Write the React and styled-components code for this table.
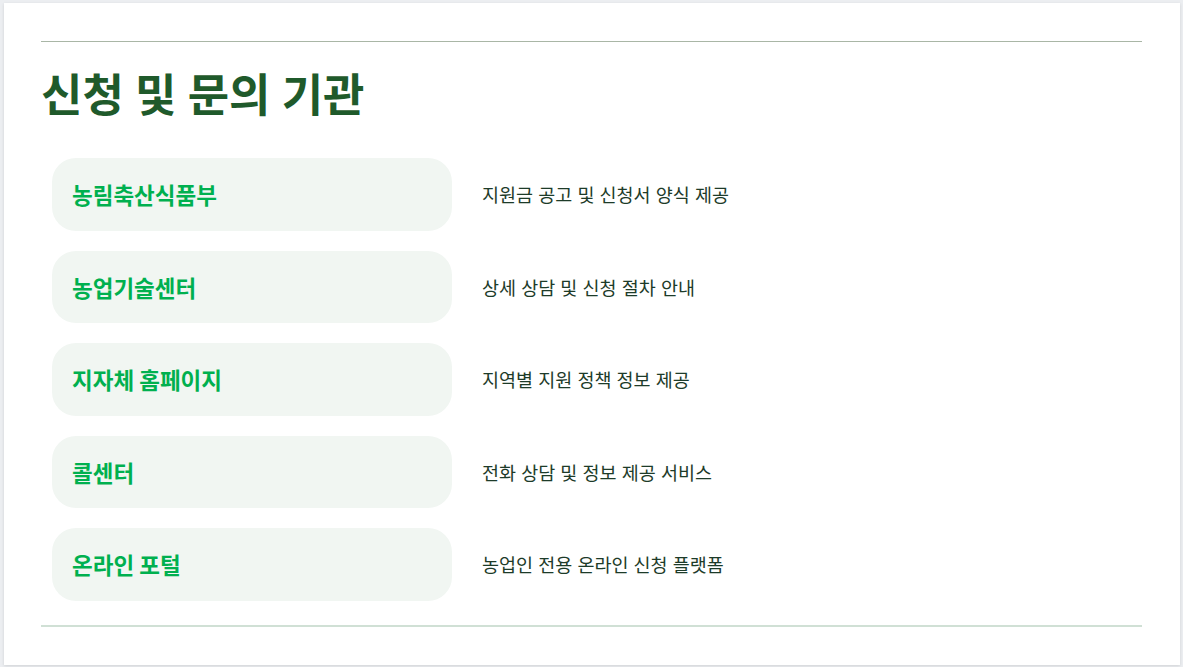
import styled, {createGlobalStyle} from "styled-components";

const items = [
  {name: "농림축산식품부", desc: "지원금 공고 및 신청서 양식 제공"},
  {name: "농업기술센터", desc: "상세 상담 및 신청 절차 안내"},
  {name: "지자체 홈페이지", desc: "지역별 지원 정책 정보 제공"},
  {name: "콜센터", desc: "전화 상담 및 정보 제공 서비스"},
  {name: "온라인 포털", desc: "농업인 전용 온라인 신청 플랫폼"},
];

function App() {
  return (
    <>
      <GlobalStyle/>
      <Card>
        <TopRule/>
        <Title>신청 및 문의 기관</Title>
        <List>
          {items.map(item => (
            <Row key={item.name}>
              <NameBox>{item.name}</NameBox>
              <Desc>{item.desc}</Desc>
            </Row>
          ))}
        </List>
        <BottomRule/>
      </Card>
    </>
  );
}

const GlobalStyle = createGlobalStyle`
  body {
    margin: 0;
    background: #eceef1;
    font-family: "Noto Sans CJK KR", "Noto Sans", sans-serif;
  }
  #root {
    padding: 3px 3px 2px 4px;
  }
`

const Card = styled.section`
  background: #ffffff;
  height: 662px;
  box-sizing: border-box;
  padding: 38px 38px 0 37px;
  box-shadow: 0 1px 3px rgba(0, 0, 0, 0.12);
`

const TopRule = styled.div`
  height: 1px;
  background: #a9b6a6;
`

const Title = styled.h1`
  margin: 22px 0 0 0;
  font-size: 45px;
  line-height: 58px;
  font-weight: 700;
  word-spacing: 1px;
  color: #1f5a2b;
`

const List = styled.div`
  display: flex;
  flex-direction: column;
  gap: 20px;
  margin-top: 36px;
  padding-left: 11px;
`

const Row = styled.div`
  display: flex;
  align-items: center;
  gap: 30px;
`

const NameBox = styled.div`
  width: 400px;
  height: 72.5px;
  box-sizing: border-box;
  display: flex;
  align-items: center;
  padding-left: 20px;
  background: #f1f6f2;
  border-radius: 24px;
  font-size: 22.5px;
  font-weight: 700;
  color: #00b04f;
`

const Desc = styled.div`
  font-size: 18.5px;
  word-spacing: 1px;
  color: #1d3b29;
`

const BottomRule = styled.div`
  height: 2px;
  margin-top: 24px;
  background: #d0e0d5;
`

export default App;
